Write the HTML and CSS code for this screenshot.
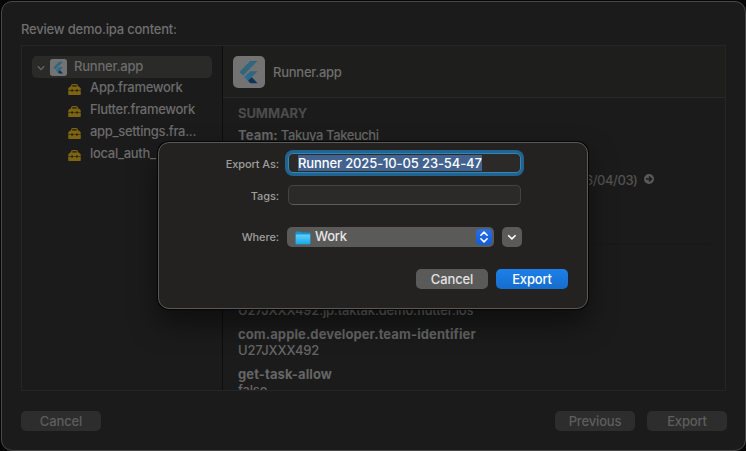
FILE: index.html
```html
<!DOCTYPE html>
<html lang="en">
<head>
<meta charset="utf-8">
<title>Export</title>
<link rel="stylesheet" href="styles.css">
</head>
<body>
<svg class="defs" width="0" height="0">
  <defs>
    <symbol id="flutter" viewBox="0 0 32 32">
      <rect width="32" height="32" rx="5" fill="#737373"/>
      <path d="M17.2 5H24.6L10.2 19.4L6.4 16Z" fill="#30667e"/>
      <path d="M17.4 15.2H24.6L18.8 21.2L15 24.8L11.4 21.1Z" fill="#30667e"/>
      <path d="M15 17.6L18.8 21.2L15 24.8L11.4 21.1Z" fill="#2b6a8f"/>
      <path d="M15 24.8L18.8 21.2L24.6 27.3H17.4Z" fill="#0d3359"/>
    </symbol>
    <symbol id="toolbox" viewBox="0 0 13 11">
      <path d="M3.6 3.2V1.9Q3.6 .7 4.8 .7H8.2Q9.4 .7 9.4 1.9V3.2" fill="none" stroke="#7c6413" stroke-width="1.2"/>
      <path d="M2 2.5H11L12.8 4.6V6.5H.2V4.6Z" fill="#7c6413"/>
      <path d="M.2 7.1H12.8V10.2Q12.8 11 12 11H1Q.2 11 .2 10.2Z" fill="#7c6413"/>
      <path d="M3.2 5.4H5V7.5H3.2ZM8 5.4H9.8V7.5H8Z" fill="#211d10"/>
    </symbol>
  </defs>
</svg>
<div class="window">
  <h1 class="title">Review demo.ipa content:</h1>
  <div class="panel">
    <nav class="sidebar">
      <div class="row root">
        <svg class="disclosure" viewBox="0 0 8 6"><path d="M.8 1.2L4 4.6L7.2 1.2"/></svg>
        <svg class="app-small"><use href="#flutter"/></svg>
        <span>Runner.app</span>
      </div>
      <div class="row"><svg class="tool"><use href="#toolbox"/></svg><span>App.framework</span></div>
      <div class="row"><svg class="tool"><use href="#toolbox"/></svg><span>Flutter.framework</span></div>
      <div class="row"><svg class="tool"><use href="#toolbox"/></svg><span>app_settings.fra...</span></div>
      <div class="row"><svg class="tool"><use href="#toolbox"/></svg><span>local_auth_</span></div>
    </nav>
    <main class="detail">
      <header class="detail-head">
        <svg class="app-large"><use href="#flutter"/></svg>
        <span>Runner.app</span>
      </header>
      <div class="summary">
        <h2 class="heading">SUMMARY</h2>
        <p class="team"><b>Team:</b> Takuya Takeuchi</p>
        <p class="expiry"><span>6/04/03)</span>
          <svg class="go" viewBox="0 0 10 10"><circle cx="5" cy="5" r="5" fill="#595959"/><path d="M2 5H7.4M5 2.5L7.5 5L5 7.5" fill="none" stroke="#1b1b1b" stroke-width="1.5"/></svg>
        </p>
        <div class="rule"></div>
        <p class="value identifier">U27JXXX492.jp.taktak.demo.flutter.ios</p>
        <p class="key team-key">com.apple.developer.team-identifier</p>
        <p class="value">U27JXXX492</p>
        <p class="key task-key">get-task-allow</p>
        <p class="value">false</p>
      </div>
    </main>
  </div>
  <footer class="footer">
    <button class="btn dim">Cancel</button>
    <button class="btn dim push">Previous</button>
    <button class="btn dim">Export</button>
  </footer>
</div>
<section class="sheet">
  <div class="field name-field"><label>Export As:</label><div class="input focused"><span class="selected">Runner 2025-10-05 23-54-47</span></div></div>
  <div class="field tags-field"><label>Tags:</label><div class="input"></div></div>
  <div class="field where-field"><label>Where:</label>
    <div class="popup">
      <svg class="folder" viewBox="0 0 16 14">
        <defs><linearGradient id="fg" x2="0" y2="1"><stop stop-color="#62d1fb"/><stop offset="1" stop-color="#1ba8e6"/></linearGradient></defs>
        <path d="M.5 1.5Q.5 .5 1.5 .5H5.2L6.4 1.6H14.5Q15.4 1.6 15.4 2.5V12.4Q15.4 13.4 14.4 13.4H1.5Q.5 13.4 .5 12.4Z" fill="#1495d1"/>
        <path d="M.8 3.4H15.2V12.2Q15.2 13 14.4 13H1.6Q.8 13 .8 12.2Z" fill="url(#fg)"/>
      </svg>
      <span>Work</span>
      <div class="stepper"><svg viewBox="0 0 16 16"><path d="M4.9 6.2L8 3.1L11.1 6.2M4.9 9.8L8 12.9L11.1 9.8"/></svg></div>
    </div>
    <button class="expand"><svg viewBox="0 0 20 20"><path d="M6.7 8.7L9.9 11.9L13.1 8.7"/></svg></button>
  </div>
  <div class="actions"><button class="btn">Cancel</button><button class="btn primary">Export</button></div>
</section>
</body>
</html>
```

FILE: styles.css
```css
* { box-sizing: border-box; }
body {
  margin: 0;
  width: 746px;
  height: 451px;
  padding: 1px 0 0 1px;
  overflow: hidden;
  background: #060606;
  color: #6e6e6e;
  font: 500 13px/16px Inter, "Liberation Sans", sans-serif;
  letter-spacing: -.17px;
}
h1, h2, p { margin: 0; font: inherit; }
b { font-weight: 700; letter-spacing: .1px; }
svg { display: block; flex: none; }
.defs { position: absolute; }
.window {
  width: 745px;
  height: 450px;
  border: 1px solid #484848;
  border-radius: 11px;
  background: #1b1b1b;
  padding: 19px 18px 0 19px;
}
.title { color: #6f6f6f; height: 24px; letter-spacing: -.2px; }
.panel {
  display: flex;
  width: 705px;
  height: 346px;
  border: 1px solid #252525;
}
.sidebar { width: 201px; padding: 10px; border-right: 1px solid #0d0d0d; color: #6c6c6c; flex: none; }
.row { display: flex; align-items: center; height: 22px; padding-left: 36px; gap: 9px; white-space: nowrap; letter-spacing: -.3px; }
.row span { margin-top: -4px; }
.root span { margin-top: -3px; letter-spacing: -.2px; }
.root { width: 180px; padding-left: 5px; gap: 0; background: #2a2a29; border-radius: 5px; }
.disclosure { width: 8px; height: 6px; margin: 1px 5px 0 0; fill: none; stroke: #666; stroke-width: 1.3; }
.app-small { width: 17px; height: 17px; margin: 0 7px 0 0; }
.tool { width: 13px; height: 11px; }
.detail { flex: 1; min-width: 0; display: flex; flex-direction: column; }
.detail-head {
  display: flex;
  align-items: center;
  gap: 8px;
  height: 52px;
  padding: 0 0 0 10px;
  background: #1e1e1c;
  border-bottom: 1px solid #292929;
  flex: none;
  letter-spacing: -.25px;
}
.app-large { width: 32px; height: 32px; }
.summary { flex: 1; min-height: 0; overflow: hidden; padding: 7px 0 0 15px; color: #666; white-space: nowrap; }
.heading { color: #4c4c4c; font-weight: 700; letter-spacing: -.08px; }
.team { margin-top: 6px; letter-spacing: -.43px; }
.expiry { display: flex; align-items: center; gap: 7px; margin: 29px 0 0 347px; color: #525252; letter-spacing: -.45px; }
.go { width: 10px; height: 10px; margin-top: -3px; }
.rule { height: 1px; margin: 55px 16px 58px 0; background: #181818; }
.key { font-weight: 700; margin-top: 8px; letter-spacing: .1px; }
.footer { display: flex; gap: 12px; margin-top: 20px; width: 706px; }
.btn {
  width: 72px;
  height: 20px;
  padding: 0;
  border: 0;
  border-radius: 5px;
  background: #5a5a59;
  color: #e3e3e3;
  font: 500 13px/19px Inter, "Liberation Sans", sans-serif;
  letter-spacing: -.15px;
}
.dim { width: 80px; background: #2d2d2d; color: #5e5e5e; }
.push { margin-left: auto; }
.primary { background: linear-gradient(#1c80ea, #166dcc); color: #fff; }
.sheet {
  position: absolute;
  left: 158px;
  top: 142px;
  width: 430px;
  height: 167px;
  border: 1px solid #5a5a59;
  border-radius: 11px;
  background: #232220;
  box-shadow: 0 0 0 1px #050505, 0 14px 28px rgba(0, 0, 0, .5);
}
.field { display: flex; align-items: center; color: #9d9d9c; font-size: 11px; letter-spacing: 0; }
.field label { width: 120px; text-align: right; margin: 1px 9px 0 0; letter-spacing: -.1px; }
.name-field { margin-top: 10px; height: 20px; }
.tags-field { margin-top: 12px; height: 20px; }
.where-field { margin-top: 22px; height: 20px; }
.where-field label { margin: 0 8px 0 0; }
.input { width: 233px; height: 20px; border: 1px solid #434341; border-bottom-color: #5c5c5b; border-radius: 5px; background: #2b2a29; }
.focused { border-color: #3686b5; box-shadow: 0 0 0 3px #20648f; padding: 1px 0 0 9px; color: #fff; font-size: 13px; letter-spacing: -.12px; }
.selected { display: inline-block; height: 16px; background: #426390; white-space: nowrap; }
.popup { display: flex; align-items: center; width: 207px; height: 20px; padding: 0 2px 0 8px; border-radius: 5px; background: #5a5a59; color: #e6e6e6; font-size: 13px; letter-spacing: -.2px; }
.popup span { margin-top: -2px; }
.folder { width: 16px; height: 14px; margin: 1px 4px 0 0; }
.stepper { margin-left: auto; width: 16px; height: 16px; border-radius: 4px; background: linear-gradient(#256fe6, #155cd5); }
.stepper path, .expand path { fill: none; stroke: #fff; stroke-width: 1.6; stroke-linecap: round; stroke-linejoin: round; }
.expand { width: 20px; height: 20px; margin-left: 8px; padding: 0; border: 0; border-radius: 5px; background: #5a5a59; }
.actions { display: flex; justify-content: flex-end; gap: 8px; margin: 22px 19px 0 0; }
```
